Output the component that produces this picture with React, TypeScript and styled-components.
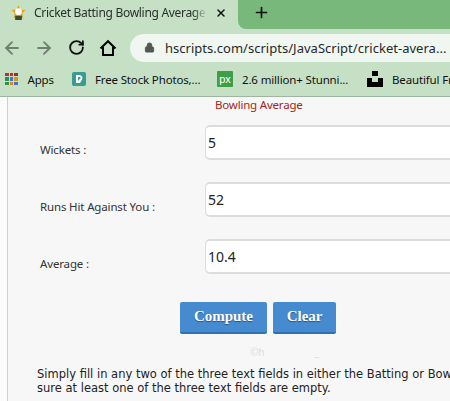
import React from "react";
import styled, { createGlobalStyle } from "styled-components";
import { ArrowLeft, ArrowRight, RotateCw, Lock, Plus, X } from "lucide-react";

const GlobalStyle = createGlobalStyle`
  html, body {
    margin: 0;
    padding: 0;
    background: #f7f7f7;
  }
`;

const fields = [
  { label: "Wickets :", value: "5" },
  { label: "Runs Hit Against You :", value: "52" },
  { label: "Average :", value: "10.4" },
];

function StarIcon() {
  return (
    <svg width="15" height="15" viewBox="0 0 18 18">
      <path d="M9 0l2.200 5.500 6.300.5-4 4 1.200 6-5.700-2.500L3.300 16l1.200-6-4-4 6.300-.5z" fill="#e2a422" />
      <circle cx="9" cy="8" r="4" fill="#fff" />
      <path d="M5 13h8v5H5z" fill="#3f4a26" />
    </svg>
  );
}

function AppsIcon() {
  const colors = ["#b5342a", "#b5342a", "#a52c24", "#2f8f4e", "#3b78c9", "#d9941b", "#2f8f4e", "#e0861c", "#3b78c9"];
  return (
    <AppsGrid>
      {colors.map((color, index) => (
        <AppsDot key={index} $color={color} />
      ))}
    </AppsGrid>
  );
}

function PexelsIcon() {
  return (
    <svg width="14" height="14" viewBox="0 0 14 14">
      <rect width="14" height="14" rx="2" fill="#3a9a94" />
      <path d="M4 3h3.500a3 3 0 0 1 2.500 4.500L8 11H4z" fill="#fff" />
      <path d="M6 5h1.500a1 1 0 0 1 0 2.200L6 9z" fill="#3a9a94" />
    </svg>
  );
}

function PxIcon() {
  return (
    <svg width="16" height="16" viewBox="0 0 16 16">
      <rect width="16" height="16" rx="1" fill="#3d9e48" />
      <text x="8" y="12" textAnchor="middle" fontSize="11" fontFamily="Liberation Sans" fill="#fff">
        px
      </text>
    </svg>
  );
}

function UnsplashIcon() {
  return (
    <svg width="16" height="16" viewBox="0 0 16 16">
      <path d="M5 0h6v5H5zM0 7h5v4h6V7h5v9H0z" fill="#000" />
    </svg>
  );
}

function HomeIcon() {
  return (
    <svg width="18" height="18" viewBox="0 0 18 18" fill="none" stroke="#000" strokeWidth="2">
      <path d="M1.500 9.500L9 2.200l7.500 7.300M4 8v8h10V8" />
    </svg>
  );
}

export default function App() {
  return (
    <>
      <GlobalStyle />
      <Window>
        <TabStrip>
          <Tab>
            <StarIcon />
            <TabTitle>Cricket Batting Bowling Average</TabTitle>
            <X size={12} strokeWidth={3} color="#111" />
          </Tab>
          <NewTab>
            <Plus size={17} strokeWidth={2.4} color="#111" />
          </NewTab>
        </TabStrip>
        <Toolbar>
          <NavButton>
            <ArrowLeft size={20} color="#6f7f72" strokeWidth={2.2} />
          </NavButton>
          <NavButton>
            <ArrowRight size={20} color="#6f7f72" strokeWidth={2.2} />
          </NavButton>
          <NavButton>
            <RotateCw size={17} color="#111" strokeWidth={2.6} />
          </NavButton>
          <NavButton>
            <HomeIcon />
          </NavButton>
          <AddressBar>
            <Lock size={11} color="#555" fill="#555" />
            <Url>hscripts.com/scripts/JavaScript/cricket-avera...</Url>
          </AddressBar>
        </Toolbar>
        <BookmarkBar>
          <Bookmark $width={67}>
            <AppsIcon />
            Apps
          </Bookmark>
          <Bookmark $width={145}>
            <PexelsIcon />
            Free Stock Photos,...
          </Bookmark>
          <Bookmark $width={150}>
            <PxIcon />
            2.6 million+ Stunni...
          </Bookmark>
          <Bookmark $width={150}>
            <UnsplashIcon />
            Beautiful Free Images
          </Bookmark>
        </BookmarkBar>
        <Page>
          <Panel>
            <SectionTitle>Bowling Average</SectionTitle>
            <Fields>
              {fields.map((field) => (
                <FieldRow key={field.label}>
                  <FieldLabel>{field.label}</FieldLabel>
                  <FieldInput readOnly value={field.value} />
                </FieldRow>
              ))}
            </Fields>
            <ButtonRow>
              <ActionButton>Compute</ActionButton>
              <ActionButton>Clear</ActionButton>
            </ButtonRow>
            <Watermark>
              <span>©h</span>
              <span>_</span>
            </Watermark>
            <HelpText>
              Simply fill in any two of the three text fields in either the Batting or Bowling section, make
              <br />
              sure at least one of the three text fields are empty.
            </HelpText>
          </Panel>
        </Page>
      </Window>
    </>
  );
}

const Window = styled.div`
  width: 450px;
  height: 401px;
  overflow: hidden;
  display: flex;
  flex-direction: column;
  font-family: "Noto Sans", sans-serif;
`;

const TabStrip = styled.div`
  height: 29px;
  background: #c5e0c5;
  display: flex;
  align-items: stretch;
  flex-shrink: 0;
`;

const Tab = styled.div`
  width: 238px;
  padding: 0 11px 4px 11px;
  box-sizing: border-box;
  display: flex;
  align-items: center;
  gap: 8px;
`;

const TabTitle = styled.div`
  flex: 1;
  font-size: 12px;
  letter-spacing: -0.3px;
  color: #2a2f2b;
  white-space: nowrap;
  overflow: hidden;
  mask-image: linear-gradient(to right, #000 92%, transparent 100%);
`;

const NewTab = styled.div`
  flex: 1;
  background: #78b97b;
  border-bottom-left-radius: 8px;
  display: flex;
  align-items: center;
  padding: 0 0 5px 15px;
`;

const Toolbar = styled.div`
  height: 37px;
  background: #c5e0c5;
  display: flex;
  align-items: center;
  flex-shrink: 0;
`;

const NavButton = styled.div`
  width: 32px;
  display: flex;
  align-items: center;
  justify-content: center;
  &:first-child {
    margin-left: -4px;
  }
`;

const AddressBar = styled.div`
  flex: 1;
  margin-left: 6px;
  height: 28px;
  background: #f0f7f1;
  border-radius: 14px 0 0 14px;
  display: flex;
  align-items: center;
  padding-left: 14px;
  gap: 10px;
`;

const Url = styled.div`
  font-size: 13px;
  letter-spacing: 0.02px;
  color: #26292b;
  white-space: nowrap;
`;

const BookmarkBar = styled.div`
  height: 31px;
  box-sizing: border-box;
  background: #c5e0c5;
  border-bottom: 1px solid #9fb5a2;
  display: flex;
  align-items: center;
  padding: 0 0 4px 5px;
  flex-shrink: 0;
  overflow: hidden;
`;

const Bookmark = styled.div<{ $width: number }>`
  width: ${(p) => p.$width}px;
  flex-shrink: 0;
  display: flex;
  align-items: center;
  gap: 9px;
  font-size: 11.500px;
  letter-spacing: -0.15px;
  color: #111;
  white-space: nowrap;
`;

const AppsGrid = styled.div`
  display: grid;
  grid-template-columns: repeat(3, 3.500px);
  gap: 1px;
  margin-right: 1px;
`;

const AppsDot = styled.div<{ $color: string }>`
  height: 3.500px;
  background: ${(p) => p.$color};
`;

const Page = styled.div`
  flex: 1;
  background: #fbfbfb;
  padding-left: 7px;
  min-height: 0;
`;

const Panel = styled.div`
  height: 100%;
  width: 600px;
  box-sizing: border-box;
  background: #f7f7f7;
  border-left: 1px solid #cfcfcf;
`;

const SectionTitle = styled.div`
  font-size: 11.500px;
  letter-spacing: -0.2px;
  line-height: 16px;
  color: #a8231a;
  padding-left: 207px;
`;

const Fields = styled.div`
  padding-top: 12px;
`;

const FieldRow = styled.div`
  height: 57px;
  display: flex;
  align-items: flex-start;
`;

const FieldLabel = styled.div`
  width: 197px;
  padding: 17px 0 0 32px;
  box-sizing: border-box;
  font-size: 11.500px;
  letter-spacing: -0.15px;
  line-height: 16px;
  color: #333;
`;

const FieldInput = styled.input`
  width: 330px;
  height: 35px;
  box-sizing: border-box;
  margin: 0;
  padding: 0 2px;
  border: 1px solid #dcdcdc;
  border-width: 2px 1px;
  border-radius: 5px;
  background: #fff;
  font-family: "Noto Sans", sans-serif;
  font-size: 14px;
  color: #222;
  outline: none;
`;

const ButtonRow = styled.div`
  display: flex;
  gap: 6px;
  padding: 6px 0 0 172px;
`;

const ActionButton = styled.button`
  height: 32px;
  padding: 0 14px 2px;
  border: none;
  border-bottom: 2px solid #2f6fb3;
  border-radius: 2px;
  background: #468ad0;
  font-family: "Liberation Serif", serif;
  font-size: 15px;
  font-weight: 700;
  letter-spacing: -0.05px;
  color: #fff;
  text-shadow: 0 1px 1px rgba(0, 0, 0, 0.4);
`;

const Watermark = styled.div`
  display: flex;
  gap: 50px;
  padding: 12px 0 0 242px;
  font-size: 10px;
  line-height: 12px;
  color: #dcdcdc;
`;

const HelpText = styled.p`
  margin: 9px 0 0;
  padding-left: 29px;
  font-family: "DejaVu Sans", sans-serif;
  font-size: 11.500px;
  line-height: 14px;
  color: #222;
  white-space: nowrap;
`;
